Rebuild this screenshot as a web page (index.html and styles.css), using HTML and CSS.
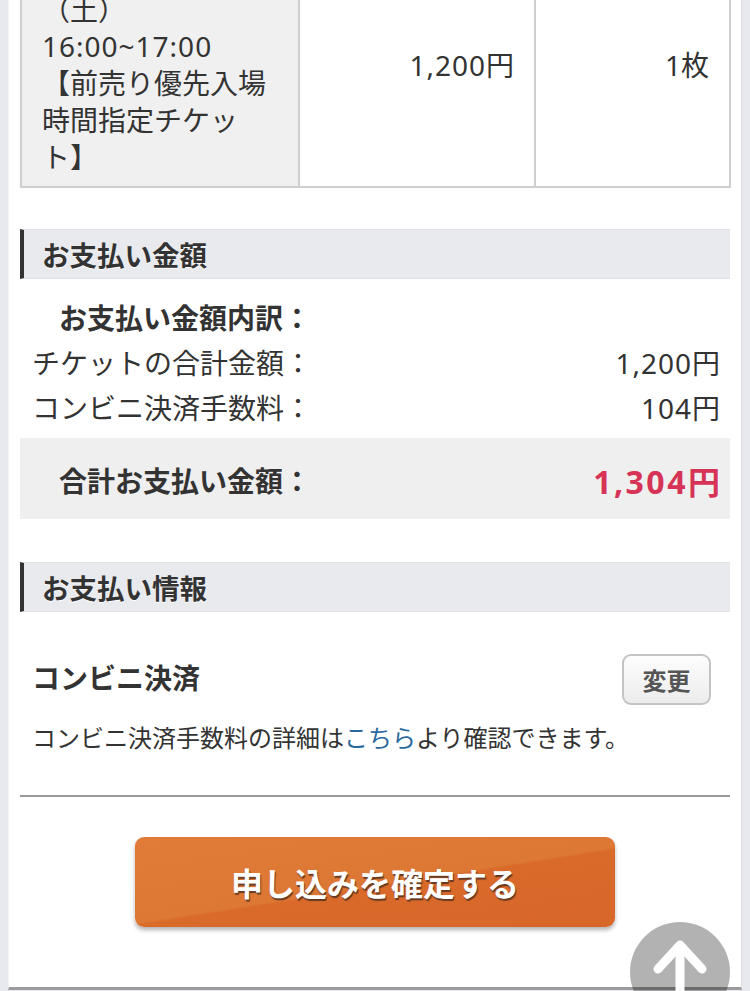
FILE: index.html
```html
<!DOCTYPE html>
<html lang="ja">
<head>
  <meta charset="UTF-8" />
  <title>お申し込み内容の確認</title>
  <link rel="stylesheet" href="styles.css">
</head>
<body>

<div class="card">
  <table class="ticket-table">
    <tr>
      <td class="ticket-name">2025年7月5日<br>（土）<br><span class="num">16:00~17:00</span><br>【前売り優先入場時間指定チケット】</td>
      <td class="ticket-price"><span class="num">1,200</span>円</td>
      <td class="ticket-count">1枚</td>
    </tr>
  </table>

  <h2 class="section-title first">お支払い金額</h2>
  <div class="breakdown">
    <div class="breakdown-head">お支払い金額内訳：</div>
    <div class="breakdown-row"><span>チケットの合計金額：</span><span><span class="num">1,200</span>円</span></div>
    <div class="breakdown-row"><span>コンビニ決済手数料：</span><span><span class="num">104</span>円</span></div>
    <div class="total-row">
      <span class="total-label">合計お支払い金額：</span>
      <span class="total-price"><span class="num">1,304</span>円</span>
    </div>
  </div>

  <h2 class="section-title">お支払い情報</h2>
  <div class="pay-method">
    <span class="pay-name">コンビニ決済</span>
    <button class="change-btn">変更</button>
  </div>
  <p class="pay-note">コンビニ決済手数料の詳細は<a href="#">こちら</a>より確認できます。</p>

  <div class="submit-area">
    <button class="submit-btn">申し込みを確定する</button>
  </div>
</div>

<a href="#" class="to-top">
  <svg width="100" height="100" viewBox="0 0 100 100">
    <path d="M28 47 L50 23 L72 47" fill="none" stroke="#fff" stroke-width="9" stroke-linecap="round" stroke-linejoin="round"/>
    <path d="M50 26 L50 100" fill="none" stroke="#fff" stroke-width="9"/>
  </svg>
</a>

</body>
</html>
```

FILE: styles.css
```css
html, body {
  margin: 0;
  padding: 0;
}
body {
  background: #e8e9ee;
  font-family: "Noto Sans", "Noto Sans CJK JP", sans-serif;
  color: #333;
  overflow: hidden;
}
.card {
  margin: -58px 8px 0;
  padding: 0 11px 60px;
  background: #fff;
  border-left: 1px solid #f3f3f5;
  border-right: 1px solid #dcdde2;
  border-bottom: 3px solid #9c9c9c;
}
.num {
  letter-spacing: 1px;
}

/* Ticket table */
.ticket-table {
  width: 711px;
  border-collapse: collapse;
  font-size: 28px;
  line-height: 36.7px;
}
.ticket-table td {
  border: 2px solid #cfcfcf;
  vertical-align: middle;
}
.ticket-name {
  width: 236px;
  padding: 11px 20px 11px;
  background: #f0f0f0;
}
.ticket-price,
.ticket-count {
  text-align: right;
  padding: 0 20px;
}
.ticket-price {
  width: 194px;
}

/* Section headings */
.section-title {
  margin: 43px 0 0;
  height: 50px;
  padding-left: 18px;
  display: flex;
  align-items: center;
  background: #e9eaee;
  border-left: 4px solid #333;
  border-top: 1px solid #e2e3e7;
  border-bottom: 1px solid #e2e3e7;
  box-sizing: border-box;
  font-size: 27.5px;
  font-weight: 700;
  text-shadow: 0 1px 0 #fff;
}
.section-title.first {
  margin-top: 41px;
}

/* Amount breakdown */
.breakdown {
  padding-top: 15px;
}
.breakdown-head,
.breakdown-row {
  height: 45px;
  display: flex;
  align-items: center;
  font-size: 28px;
}
.breakdown-head {
  padding-left: 39px;
  font-weight: 700;
}
.breakdown-row {
  justify-content: space-between;
  padding: 0 10px 0 12px;
}
.total-row {
  margin-top: 9px;
  height: 81px;
  padding: 2px 10px 0 39px;
  box-sizing: border-box;
  display: flex;
  align-items: center;
  justify-content: space-between;
  background: #efefef;
}
.total-label {
  font-size: 28px;
  font-weight: 700;
}
.total-price {
  font-size: 32px;
  font-weight: 700;
  color: #d63356;
}
.total-price .num {
  letter-spacing: 2.5px;
}

/* Payment info */
.pay-method {
  margin-top: 42px;
  height: 51px;
  padding: 0 19px 0 12px;
  display: flex;
  align-items: center;
  justify-content: space-between;
}
.pay-name {
  font-size: 28px;
  font-weight: 700;
  margin-bottom: 6px;
}
.change-btn {
  width: 89px;
  height: 51px;
  border: 2px solid #c4c4c4;
  border-radius: 9px;
  background: linear-gradient(#fdfdfd, #ececec);
  color: #555;
  font-family: inherit;
  font-size: 24px;
  font-weight: 700;
  padding: 0;
}
.pay-note {
  margin: 16px 0 0;
  padding: 0 12px 40px;
  line-height: 34px;
  font-size: 24px;
  border-bottom: 2px solid #9a9a9a;
}
.pay-note a {
  color: #2b68a0;
  text-decoration: none;
}

/* Submit */
.submit-area {
  padding-top: 40px;
  display: flex;
  justify-content: center;
}
.submit-btn {
  width: 480px;
  height: 90px;
  border: none;
  border-radius: 9px;
  background: linear-gradient(171deg, #e07c38 0%, #dd7734 52%, #d96a2a 53.5%, #d8672a 100%);
  box-shadow: 0 3px 4px rgba(0,0,0,0.3);
  color: #fff;
  font-family: inherit;
  font-size: 32px;
  font-weight: 700;
  text-shadow: 1px 2px 1px rgba(60,40,30,0.75);
}

/* Scroll to top */
.to-top {
  position: fixed;
  right: 20px;
  bottom: -31px;
  width: 100px;
  height: 100px;
  border-radius: 50%;
  background: rgba(0,0,0,0.3);
  overflow: hidden;
}
.to-top svg {
  display: block;
}
```
